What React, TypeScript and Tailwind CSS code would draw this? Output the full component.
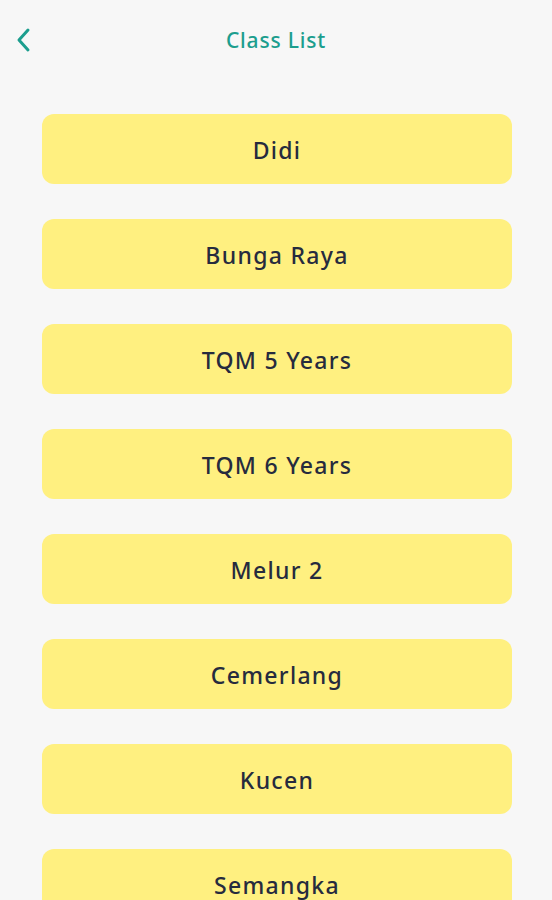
import React from "react";

const classes = [
  "Didi",
  "Bunga Raya",
  "TQM 5 Years",
  "TQM 6 Years",
  "Melur 2",
  "Cemerlang",
  "Kucen",
  "Semangka",
];

export default function App() {
  return (
    <div
      className="w-[552px] h-[900px] overflow-hidden bg-[#f7f7f7]"
      style={{ fontFamily: "'Noto Sans', Lato, sans-serif" }}
    >
      <div className="relative h-[82px] flex items-center justify-center">
        <button className="absolute left-[14px] top-[27px] w-[18px] h-[26px] flex items-center justify-center">
          <svg width="16" height="26" viewBox="0 0 16 26" fill="none">
            <path
              d="M13 3 L4 13 L13 23"
              stroke="#1c9e8e"
              strokeWidth="3"
              strokeLinecap="round"
              strokeLinejoin="round"
            />
          </svg>
        </button>
        <h1 className="text-[21px] font-medium text-[#1c9e8e] tracking-[0.8px]">
          Class List
        </h1>
      </div>
      <div className="flex flex-col gap-[35px] pl-[42px] pr-[40px] pt-[32px]">
        {classes.map((c) => (
          <div
            key={c}
            className="h-[70px] shrink-0 rounded-[12px] bg-[#fff080] flex items-center justify-center"
          >
            <span className="text-[23px] font-medium text-[#262b3e] tracking-[1.3px] translate-y-[1px]">
              {c}
            </span>
          </div>
        ))}
      </div>
    </div>
  );
}
